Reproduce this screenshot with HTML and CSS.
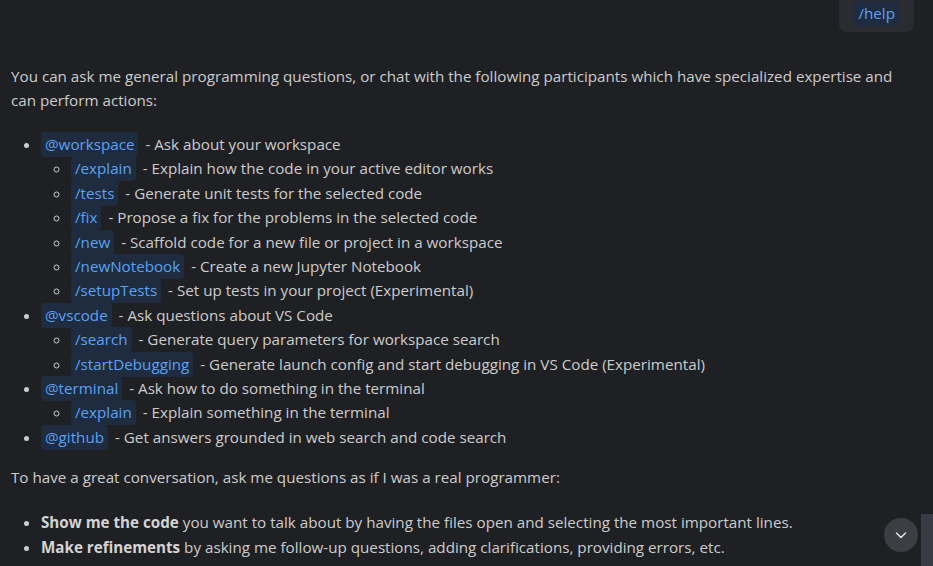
FILE: index.html
```html
<!DOCTYPE html>
<html>
<head>
<meta charset="utf-8">
<link rel="stylesheet" href="styles.css">
</head>
<body>
<div class="chat">
  <div class="request-row">
    <div class="bubble"><span class="chip">/help</span></div>
  </div>
  <div class="response">
    <p class="para">You can ask me general programming questions, or chat with the following participants which have specialized expertise and can perform actions:</p>
    <ul class="list">
      <li><span class="chip">@workspace</span> - Ask about your workspace
        <ul class="sublist">
          <li><span class="chip">/explain</span> - Explain how the code in your active editor works</li>
          <li><span class="chip">/tests</span> - Generate unit tests for the selected code</li>
          <li><span class="chip">/fix</span> - Propose a fix for the problems in the selected code</li>
          <li><span class="chip">/new</span> - Scaffold code for a new file or project in a workspace</li>
          <li><span class="chip">/newNotebook</span> - Create a new Jupyter Notebook</li>
          <li><span class="chip">/setupTests</span> - Set up tests in your project (Experimental)</li>
        </ul>
      </li>
      <li><span class="chip">@vscode</span> - Ask questions about VS Code
        <ul class="sublist">
          <li><span class="chip">/search</span> - Generate query parameters for workspace search</li>
          <li><span class="chip">/startDebugging</span> - Generate launch config and start debugging in VS Code (Experimental)</li>
        </ul>
      </li>
      <li><span class="chip">@terminal</span> - Ask how to do something in the terminal
        <ul class="sublist">
          <li><span class="chip">/explain</span> - Explain something in the terminal</li>
        </ul>
      </li>
      <li><span class="chip">@github</span> - Get answers grounded in web search and code search</li>
    </ul>
    <p class="para para-gap">To have a great conversation, ask me questions as if I was a real programmer:</p>
    <ul class="list list-tips">
      <li><strong>Show me the code</strong> you want to talk about by having the files open and selecting the most important lines.</li>
      <li><strong>Make refinements</strong> by asking me follow-up questions, adding clarifications, providing errors, etc.</li>
    </ul>
  </div>
</div>
<button class="scroll-down" aria-label="Scroll down">
  <svg width="16" height="16" viewBox="0 0 16 16"><path d="M3.5 6 L8 10.5 L12.5 6" fill="none" stroke="#e6e6e6" stroke-width="1.5" stroke-linecap="round" stroke-linejoin="round"/></svg>
</button>
<div class="scrollbar"></div>
</body>
</html>
```

FILE: styles.css
```css
html, body {
  margin: 0;
  padding: 0;
  background: #1f2023;
  height: 100%;
  overflow: hidden;
}
body {
  font-family: "Open Sans", "Noto Sans", sans-serif;
  font-size: 15.2px;
  color: #cccccc;
  position: relative;
}
.chat {
  padding: 0 19px 0 11px;
}
.request-row {
  display: flex;
  justify-content: flex-end;
}
.bubble {
  background: #2a2c31;
  border-radius: 0 0 8px 8px;
  padding: 1px 15px 7px 15px;
  line-height: 24px;
}
.chip {
  color: #5aa2f5;
  background: #1f2b3e;
  border-radius: 4px;
  padding: 2px 4px 3px 4px;
  margin-right: 3px;
}
.bubble .chip { margin-right: 0; }
.response {
  margin-top: 32px;
}
.para {
  margin: 0;
  line-height: 24px;
}
.list {
  margin: 20px 0 0 0;
  padding-left: 30px;
  line-height: 24.4px;
  list-style: disc;
}
.sublist {
  margin: 0;
  padding-left: 30px;
  list-style: circle;
}
.para-gap {
  margin-top: 16px;
}
.list-tips {
  margin-top: 21px;
}
strong {
  font-weight: 700;
  color: #d4d4d4;
}
.scroll-down {
  position: absolute;
  left: 884px;
  top: 518px;
  width: 34px;
  height: 34px;
  border-radius: 50%;
  border: none;
  background: #3c3e43;
  display: flex;
  align-items: center;
  justify-content: center;
  padding: 0;
}
.scrollbar {
  position: absolute;
  left: 921px;
  top: 514px;
  width: 12px;
  height: 52px;
  background: #383a44;
}
```
